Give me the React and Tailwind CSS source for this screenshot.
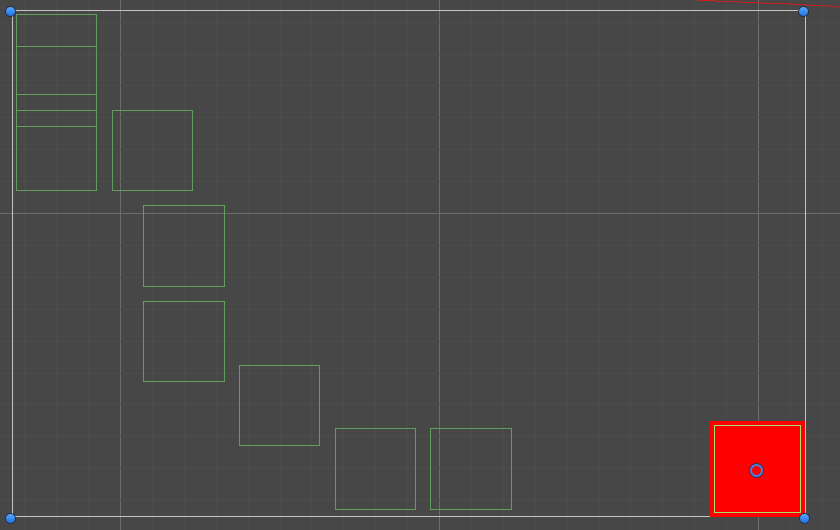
const STEP = 31.9;
const MAJOR_X = 120;
const MAJOR_Y = 213;

const boxes = [
  { x: 16, y: 14, w: 81, h: 81 },
  { x: 16, y: 46, w: 81, h: 81 },
  { x: 16, y: 110, w: 81, h: 81 },
  { x: 112, y: 110, w: 81, h: 81 },
  { x: 143, y: 205, w: 82, h: 82 },
  { x: 143, y: 301, w: 82, h: 81 },
  { x: 239, y: 365, w: 81, h: 81 },
  { x: 335, y: 428, w: 81, h: 82 },
  { x: 430, y: 428, w: 82, h: 82 },
];

function Grid() {
  const minorX = [];
  const minorY = [];
  for (let i = -4; i < 24; i++) {
    const x = Math.round(MAJOR_X + i * STEP) + 0.5;
    if (x > 0 && x < 840) minorX.push({ x, major: i % 10 === 0 });
  }
  for (let i = -7; i < 11; i++) {
    const y = Math.round(MAJOR_Y + i * STEP) + 0.5;
    if (y > 0 && y < 530) minorY.push({ y, major: i % 10 === 0 });
  }
  return (
    <svg className="absolute inset-0" width="840" height="530">
      {minorX.map((l) => (
        <line key={"x" + l.x} x1={l.x} y1="0" x2={l.x} y2="530" stroke={l.major ? "#6c6c6c" : "#4c4c4c"} strokeWidth="1" />
      ))}
      {minorY.map((l) => (
        <line key={"y" + l.y} x1="0" y1={l.y} x2="840" y2={l.y} stroke={l.major ? "#6c6c6c" : "#4c4c4c"} strokeWidth="1" />
      ))}
      {/* camera bounds */}
      <rect x="12.5" y="10.5" width="793" height="506" fill="none" stroke="#c4c4c4" strokeWidth="1" />
      {/* red line at the top edge */}
      <polyline
        points="697,0.5 716,0.5 716,1.5 740,1.5 740,2.5 762,2.5 762,3.5 790,3.5 790,4.5 806,4.5 806,5.5 820,5.5 840,7"
        fill="none"
        stroke="#c62020"
        strokeWidth="1.2"
      />
    </svg>
  );
}

function Handle({ x, y }) {
  return (
    <div
      className="absolute w-[11px] h-[11px] rounded-full border border-[#1d2d44] bg-gradient-to-b from-[#5aa8ff] to-[#1f6fe0]"
      style={{ left: x - 5.5, top: y - 5.5 }}
    />
  );
}

export default function App() {
  return (
    <div className="relative w-[840px] h-[530px] overflow-hidden bg-[#474747]">
      <Grid />

      {boxes.map((b, i) => (
        <div
          key={i}
          className="absolute border border-[#5f9e5c]"
          style={{ left: b.x, top: b.y, width: b.w, height: b.h }}
        />
      ))}

      {/* selected sprite */}
      <div className="absolute left-[710px] top-[421px] w-[95px] h-[96px] bg-[#ff0000] p-[4px]">
        <div className="w-full h-full border border-[#a8e070]" />
      </div>
      <div className="absolute left-[749.5px] top-[463.5px] w-[13px] h-[13px] rounded-full border-[2.5px] border-[#3d82e6] bg-transparent shadow-[0_0_0_1px_#243a5e]" />

      <Handle x={10} y={11} />
      <Handle x={803.5} y={11} />
      <Handle x={10} y={518} />
      <Handle x={804} y={518} />
    </div>
  );
}
